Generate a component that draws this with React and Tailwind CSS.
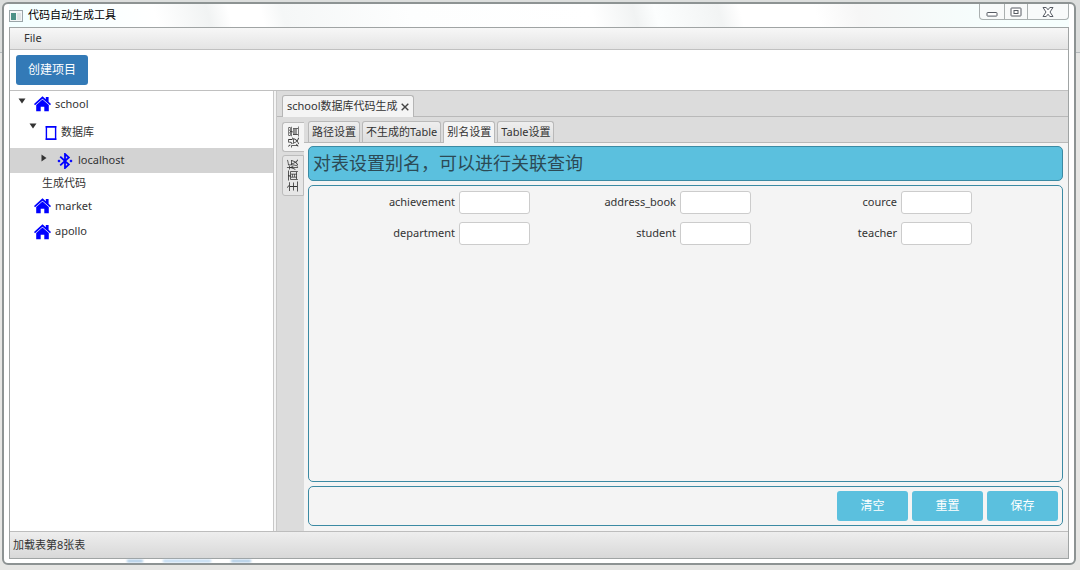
import { useState } from "react";
import clsx from "clsx";

const tables = ["achievement", "address_book", "cource", "department", "student", "teacher"];

const settingTabs = ["路径设置", "不生成的Table", "别名设置", "Table设置"];

const HomeIcon = () => (
    <svg className="h-4 w-[17px] shrink-0" viewBox="0 0 17 16" fill="#0000ff">
        <path d="M8.5 0.3 11.8 3.2V1H14.6V5.7L17 8 16 9.2 8.5 2.7 1 9.2 0 8Z" />
        <path d="M8.5 3.4 14.8 8.9V15.2H10.3V10.8H6.7V15.2H2.2V8.9Z" />
    </svg>
);

const DatabaseIcon = () => (
    <svg className="h-4 w-3 shrink-0" viewBox="0 0 12 16" fill="none" stroke="#0000ff">
        <path d="M1.4 1V15M10.6 1V15" strokeWidth="1.4" />
        <path d="M0.7 1.8H11.3M0.7 14.2H11.3" strokeWidth="1.8" />
    </svg>
);

const BluetoothIcon = () => (
    <svg className="h-4 w-4 shrink-0" viewBox="0 0 16 16" fill="none" stroke="#0000ff">
        <path d="M3.2 3.6 11.8 11.6 8 15V1L11.8 4.4 3.2 12.4" strokeWidth="1.8" />
        <circle cx="2" cy="8" r="0.9" fill="#0000ff" />
        <circle cx="14" cy="8" r="0.9" fill="#0000ff" />
    </svg>
);

const Arrow = ({ open }) => (
    <svg className="mb-1.5 h-2 w-2 shrink-0" viewBox="0 0 8 8" fill="#333333">
        {open ? <path d="M0.5 1.5H7.5L4 6.5Z" /> : <path d="M1.5 0.5V7.5L6.5 4Z" />}
    </svg>
);

const TitleBar = () => (
    <header className="flex h-[23px] items-start justify-between bg-[linear-gradient(75deg,#f2ffff_0%,#ffffff_14%,#f1f3f3_19%,#ffffff_21%,#ffffff_24%,#f5f7f7_26%,#fdfefe_38%,#ffffff_55%,#f1f3f3_59%,#fcfefe_61%,#f2f4f4_67%,#ffffff_69%,#ffffff_76%,#f6f6f6_80%,#f6fffe_94%)]">
        <div className="flex h-[23px] items-center gap-[5px]">
            <svg className="h-3 w-3.5" viewBox="0 0 14 12">
                <rect x="0.5" y="0.5" width="13" height="11" fill="#f4f6f6" stroke="#9aa5a8" />
                <rect x="2" y="3" width="5" height="7" fill="#4d9186" />
                <rect x="8" y="3" width="4" height="7" fill="#dfe5e5" />
            </svg>
            <h1 className="text-[11px] text-black">代码自动生成工具</h1>
        </div>
        <div className="flex h-4 rounded-b border border-t-0 border-[#aab0b0] bg-[#f8fafa]">
            <button aria-label="minimize" className="flex w-6 items-center justify-center">
                <svg className="h-3 w-3" viewBox="0 0 12 12"><rect x="1" y="6.5" width="10" height="3.6" rx="0.6" fill="#fff" stroke="#565b63" /></svg>
            </button>
            <button aria-label="maximize" className="flex w-6 items-center justify-center border-x border-[#aab0b0]">
                <svg className="h-3 w-3" viewBox="0 0 12 12" fill="#fff" stroke="#565b63">
                    <rect x="1" y="2" width="10" height="8" rx="0.6" />
                    <rect x="4" y="4.5" width="4" height="3" />
                </svg>
            </button>
            <button aria-label="close" className="flex w-10 items-center justify-center">
                <svg className="h-3 w-3" viewBox="0 0 12 12" fill="#fff" stroke="#565b63">
                    <path d="M1 1.5H4.2L6 3.8 7.8 1.5H11L8 6 11 10.5H7.8L6 8.2 4.2 10.5H1L4 6Z" />
                </svg>
            </button>
        </div>
    </header>
);

const TreeItem = ({ className, label, icon, arrow, selected, onSelect }) => (
    <li className={clsx(selected && "bg-[#d3d3d3]")}>
        <button onClick={onSelect} className={clsx("flex w-full items-center text-left", className)}>
            {arrow}
            {icon}
            <span>{label}</span>
        </button>
    </li>
);

const ProjectTree = () => {
    const [selected, setSelected] = useState("localhost");
    const item = (name) => ({ label: name, selected: selected === name, onSelect: () => setSelected(name) });

    return (
        <ul className="w-[263px] shrink-0 bg-white">
            <TreeItem {...item("school")} className="h-[26px] gap-1 pl-2" arrow={<span className="mr-1 flex"><Arrow open /></span>} icon={<HomeIcon />} />
            <TreeItem {...item("数据库")} className="h-[31px] gap-1 pl-[19px]" arrow={<span className="mr-1 mb-2 flex"><Arrow open /></span>} icon={<DatabaseIcon />} />
            <TreeItem {...item("localhost")} className="h-[25px] gap-[5px] pl-[30px]" arrow={<span className="mr-1 flex"><Arrow /></span>} icon={<BluetoothIcon />} />
            <TreeItem {...item("生成代码")} className="h-5 pl-8" />
            <TreeItem {...item("market")} className="h-[26px] gap-1 pl-6" icon={<HomeIcon />} />
            <TreeItem {...item("apollo")} className="h-[25px] gap-1 pl-6" icon={<HomeIcon />} />
        </ul>
    );
};

const AliasForm = () => (
    <form className="flex grow flex-col gap-1 pt-[3px] pr-[5px] pb-[5px] pl-1" onSubmit={(e) => e.preventDefault()}>
        <h2 className="rounded-[5px] border border-[#3b8aa3] bg-[#5bc0de] px-1 py-1 text-lg leading-[25px] text-[#2c4a55]">
            对表设置别名，可以进行关联查询
        </h2>
        <div className="grid grow auto-rows-min grid-cols-[repeat(3,auto)] justify-start gap-y-2 rounded-[5px] border border-[#3b8aa3] py-[5px]">
            {tables.map((name) => (
                <div key={name} className="flex items-center gap-1">
                    <label htmlFor={name} className="w-[146px] text-right">{name}</label>
                    <input id={name} type="text" className="h-[23px] w-[71px] rounded-[3px] border border-[#cccccc] bg-white px-1.5" />
                </div>
            ))}
        </div>
        <div className="flex justify-end gap-1 rounded-[5px] border border-[#3b8aa3] p-1">
            {["清空", "重置", "保存"].map((text) => (
                <button key={text} className="h-[30px] w-[71px] rounded-[3px] bg-[#5bc0de] text-xs text-white">{text}</button>
            ))}
        </div>
    </form>
);

const Workspace = () => {
    const [tab, setTab] = useState("别名设置");
    const [side, setSide] = useState("设置");

    return (
        <section className="flex min-w-0 grow flex-col">
            <div className="flex h-[26px] items-end border-b border-[#b9b9b9] bg-[#dcdcdc] pl-[5px]">
                <div className="-mb-px flex h-[22px] items-center gap-[3px] rounded-t-[3px] border border-b-0 border-[#b5b5b5] bg-[#f4f4f4] px-1">
                    <span>school数据库代码生成</span>
                    <button aria-label="close tab">
                        <svg className="h-2 w-2" viewBox="0 0 8 8" stroke="#444444" strokeWidth="1.4"><path d="M0.7 0.7 7.3 7.3M7.3 0.7 0.7 7.3" /></svg>
                    </button>
                </div>
            </div>
            <div className="flex grow">
                <div className="flex w-[27px] shrink-0 flex-col items-end gap-[3px] bg-[#dcdcdc] pt-[5px]">
                    {["设置", "主面板"].map((name) => (
                        <button
                            key={name}
                            onClick={() => setSide(name)}
                            className={clsx("flex w-[22px] justify-center rounded-l-[3px] border border-[#bcbcbc] py-[3px]", side === name ? "border-r-0 bg-[#f4f4f4]" : "bg-[#e6e6e6]")}
                        >
                            <span className="rotate-180 leading-4 [text-orientation:sideways] [writing-mode:vertical-rl]">{name}</span>
                        </button>
                    ))}
                </div>
                <div className="flex min-w-0 grow flex-col bg-[#f4f4f4]">
                    <div className="flex h-[26px] items-end gap-0.5 border-b border-[#b9b9b9] bg-[#dcdcdc] pl-1">
                        {settingTabs.map((name) => (
                            <button
                                key={name}
                                onClick={() => setTab(name)}
                                className={clsx("rounded-t-[3px] border border-b-0 border-[#b9b9b9] px-[3px]", tab === name ? "-mb-px h-[22px] bg-[#f4f4f4]" : "h-[21px] bg-linear-to-b from-[#eeeeee] to-[#dedede]")}
                            >
                                {name}
                            </button>
                        ))}
                    </div>
                    <AliasForm />
                </div>
            </div>
        </section>
    );
};

const App = () => {
    return (
        <div className="flex min-h-screen flex-col bg-[linear-gradient(#dcdedd_52px,#b4babd_52px,#b4babd_53px,#e6e6e4_53px)] px-0.5 pt-0.5 pb-[5px] font-['Noto_Sans','Noto_Sans_CJK_SC',sans-serif] text-[11px] text-[#333333]">
            <div className="mr-0.5 flex grow flex-col rounded-md border-2 border-[#8d9393] bg-white px-[5px]">
                <TitleBar />
                <main className="flex grow flex-col border border-[#a0a4a4]">
                    <nav className="flex h-[22px] items-center border-b border-[#c0c0c0] bg-linear-to-b from-[#f7f7f7] to-[#e4e4e4] px-3.5">
                        <button>File</button>
                    </nav>
                    <div className="flex border-b border-[#c0c0c0] bg-white px-1.5 py-[5px]">
                        <button className="h-[30px] rounded-[3px] bg-[#337ab7] px-3 text-xs text-white">创建项目</button>
                    </div>
                    <div className="flex grow">
                        <ProjectTree />
                        <div className="w-1 shrink-0 border-x border-[#c8c8c8] bg-[#f4f4f4]" />
                        <Workspace />
                    </div>
                    <footer className="flex h-[27px] items-center border-t border-[#bdbdbd] bg-linear-to-b from-[#eeeeee] to-[#d8d8d8] px-[3px]">加载表第8张表</footer>
                </main>
                {/* glass edge, page text shines through */}
                <div className="flex h-1 items-center gap-5 pl-[118px]">
                    <span className="h-0.5 w-4 bg-[#8fb8dc] blur-[1px]" />
                    <span className="h-0.5 w-12 bg-[#a9cdee] blur-[1px]" />
                    <span className="h-0.5 w-5 bg-[#8fb8dc] blur-[1px]" />
                </div>
            </div>
        </div>
    );
};

export default App;
